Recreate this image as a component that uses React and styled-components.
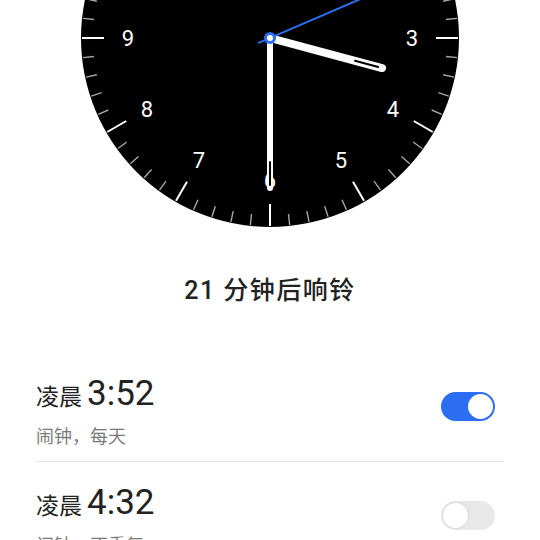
import React from "react";
import styled, { createGlobalStyle } from "styled-components";

const GlobalStyle = createGlobalStyle`
  body {
    margin: 0;
    background: #ffffff;
    font-family: Roboto, "Noto Sans CJK SC", sans-serif;
  }
`;

const BLUE = "#2c6ef2";
const CX = 190;
const CY = 190;
const R = 189;

const polar = (deg, r) => {
  const a = (deg * Math.PI) / 180;
  return [CX + r * Math.sin(a), CY - r * Math.cos(a)];
};

const alarms = [
  { period: "凌晨", time: "3:52", note: "闹钟，每天", on: true },
  { period: "凌晨", time: "4:32", note: "闹钟，不重复", on: false },
];

const Hand = ({ deg, length, width, slotFrom, slotTo }) => {
  const [x1, y1] = polar(deg, 0);
  const [x2, y2] = polar(deg, length);
  const [sx1, sy1] = polar(deg, slotFrom);
  const [sx2, sy2] = polar(deg, slotTo);
  return (
    <g strokeLinecap="round">
      <line x1={x1} y1={y1} x2={x2} y2={y2} stroke="#fff" strokeWidth={width} />
      <line x1={sx1} y1={sy1} x2={sx2} y2={sy2} stroke="#000" strokeWidth={2} />
    </g>
  );
};

const ClockFace = () => {
  const ticks = [];
  for (let i = 0; i < 60; i++) {
    const major = i % 5 === 0;
    const [x1, y1] = polar(i * 6, major ? 166 : 177);
    const [x2, y2] = polar(i * 6, 188);
    ticks.push(
      <line
        key={i}
        x1={x1}
        y1={y1}
        x2={x2}
        y2={y2}
        stroke={major ? "#fff" : "#a8a8a8"}
        strokeWidth={major ? 2 : 1.4}
      />
    );
  }
  const numbers = [];
  for (let n = 1; n <= 12; n++) {
    const [x, y] = polar(n * 30, 142);
    numbers.push(
      <NumberText key={n} x={x} y={y} textAnchor="middle" dominantBaseline="central">
        {n}
      </NumberText>
    );
  }
  const [tx1, ty1] = polar(66.7, -13);
  const [tx2, ty2] = polar(66.7, 176);
  return (
    <Face width="380" height="380" viewBox="0 0 380 380">
      <circle cx={CX} cy={CY} r={R} fill="#000" />
      {ticks}
      {numbers}
      <Hand deg={105} length={116} width={8} slotFrom={88} slotTo={112} />
      <Hand deg={180} length={150} width={6} slotFrom={124} slotTo={147} />
      <line x1={tx1} y1={ty1} x2={tx2} y2={ty2} stroke={BLUE} strokeWidth={2} />
      <circle cx={CX} cy={CY} r={6} fill={BLUE} />
      <circle cx={CX} cy={CY} r={3} fill="#fff" />
    </Face>
  );
};

const App = () => {
  return (
    <Page>
      <GlobalStyle />
      <ClockArea>
        <ClockFace />
      </ClockArea>
      <NextRing>21 分钟后响铃</NextRing>
      <AlarmList>
        {alarms.map((a) => (
          <AlarmRow key={a.time}>
            <AlarmInfo>
              <TimeLine>
                <Period>{a.period}</Period>
                <Time>{a.time}</Time>
              </TimeLine>
              <Note>{a.note}</Note>
            </AlarmInfo>
            <Toggle on={a.on ? 1 : 0}>
              <Knob on={a.on ? 1 : 0} />
            </Toggle>
          </AlarmRow>
        ))}
      </AlarmList>
    </Page>
  );
};

export default App;

const Page = styled.div`
  width: 540px;
  height: 540px;
  overflow: hidden;
  background: #fff;
`;

const ClockArea = styled.div`
  height: 230px;
  overflow: hidden;
  display: flex;
  justify-content: center;
`;

const Face = styled.svg`
  flex-shrink: 0;
  margin-top: -152px;
`;

const NumberText = styled.text`
  fill: #fff;
  font-family: Roboto, sans-serif;
  font-size: 22px;
`;

const NextRing = styled.div`
  margin-top: 43px;
  text-align: center;
  font-size: 25px;
  line-height: 36px;
  font-weight: 500;
  letter-spacing: 1.5px;
  color: #222;
`;

const AlarmList = styled.div`
  margin: 44px 36px 0;
`;

const AlarmRow = styled.div`
  display: flex;
  align-items: center;
  justify-content: space-between;
  padding: 21px 9px 14px 0;
  border-bottom: 1px solid #e6e6e6;
`;

const AlarmInfo = styled.div`
  display: flex;
  flex-direction: column;
`;

const TimeLine = styled.div`
  display: flex;
  align-items: baseline;
  height: 40px;
  color: #222;
`;

const Period = styled.span`
  font-family: "Noto Sans CJK SC", sans-serif;
  font-size: 23px;
  line-height: 40px;
  margin-right: 5px;
`;

const Time = styled.span`
  font-family: Roboto, sans-serif;
  font-size: 35px;
  line-height: 40px;
`;

const Note = styled.div`
  margin-top: 9px;
  font-family: "Noto Sans CJK SC", sans-serif;
  font-size: 18px;
  line-height: 24px;
  color: #7a7a7a;
`;

const Toggle = styled.div`
  position: relative;
  width: 54px;
  height: 29px;
  margin-bottom: 8px;
  border-radius: 15px;
  background: ${(p) => (p.on ? BLUE : "#e8e8e8")};
  flex-shrink: 0;
`;

const Knob = styled.div`
  position: absolute;
  top: 2px;
  left: ${(p) => (p.on ? "27px" : "2px")};
  width: 25px;
  height: 25px;
  border-radius: 50%;
  background: #fff;
  box-shadow: ${(p) => (p.on ? "none" : "0 0 0 1px #dcdcdc")};
`;
